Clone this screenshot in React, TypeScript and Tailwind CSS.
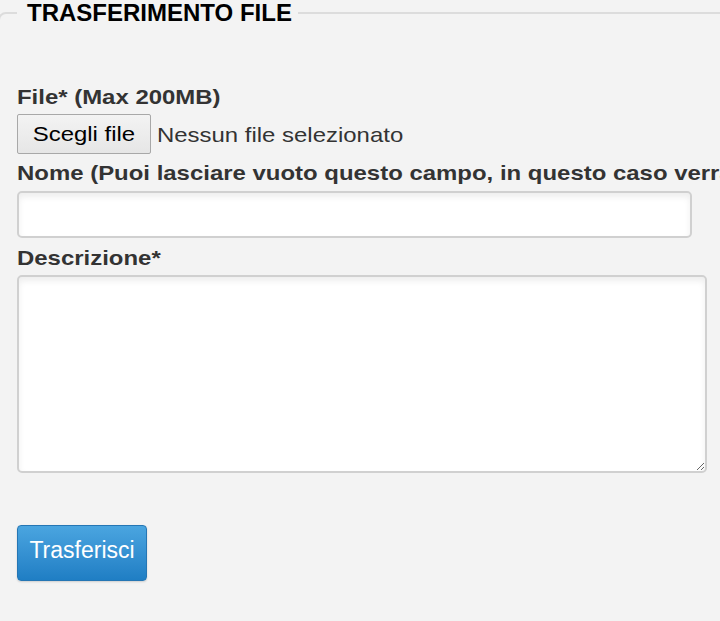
import React from "react";

function Label({ children }: { children: React.ReactNode }) {
  return (
    <div className="h-[25px] text-[21px] leading-[25px] font-bold text-[#333333] whitespace-nowrap">
      <span className="inline-block origin-left scale-x-[1.14]">{children}</span>
    </div>
  );
}

export default function App() {
  return (
    <div className="w-[720px] h-[621px] overflow-hidden bg-[#f3f3f3] font-['Liberation_Sans',Arial,sans-serif]">
      <fieldset className="m-0 -ml-[2px] w-[760px] min-w-0 rounded-[8px] border-2 border-[#dcdcdc] pl-[17px] pr-4 pt-[58px] pb-[120px]">
        <legend className="pl-[10px] pr-[6px] text-[24px] leading-[26px] font-bold text-black">
          TRASFERIMENTO FILE
        </legend>

        <Label>File* (Max 200MB)</Label>

        <div className="mt-[5px] flex items-center">
          <button
            type="button"
            className="flex h-[40px] w-[134px] items-center justify-center rounded-[2px] border border-[#a8a8a8] bg-linear-to-b from-[#f3f3f3] to-[#e6e6e6] text-[21px] text-black"
          >
            <span className="inline-block scale-x-[1.14]">Scegli file</span>
          </button>
          <span className="ml-[6px] text-[21px] leading-[25px] text-[#333333] whitespace-nowrap">
            <span className="inline-block origin-left scale-x-[1.14]">Nessun file selezionato</span>
          </span>
        </div>

        <div className="mt-[6px]">
          <Label>Nome (Puoi lasciare vuoto questo campo, in questo caso verrà usato il nome del file)</Label>
        </div>

        <input
          type="text"
          className="mt-[6px] block h-[47px] w-[675px] rounded-[5px] border-2 border-[#d0d0d0] bg-white shadow-[inset_0_4px_6px_rgba(0,0,0,0.07)] outline-none"
        />

        <div className="mt-[7px]">
          <Label>Descrizione*</Label>
        </div>

        <textarea className="mt-[5px] block h-[198px] w-[690px] rounded-[5px] border-2 border-[#d0d0d0] bg-white shadow-[inset_0_4px_6px_rgba(0,0,0,0.07)] outline-none" />

        <button
          type="button"
          className="mt-[52px] flex h-[56px] w-[130px] items-center justify-center rounded-[4px] border border-[#2576b4] bg-linear-to-b from-[#4aa5e0] to-[#1f7ec4] pb-[6px] text-[23px] text-white shadow-[0_1px_2px_rgba(0,0,0,0.15)]"
        >
          Trasferisci
        </button>
      </fieldset>
    </div>
  );
}
